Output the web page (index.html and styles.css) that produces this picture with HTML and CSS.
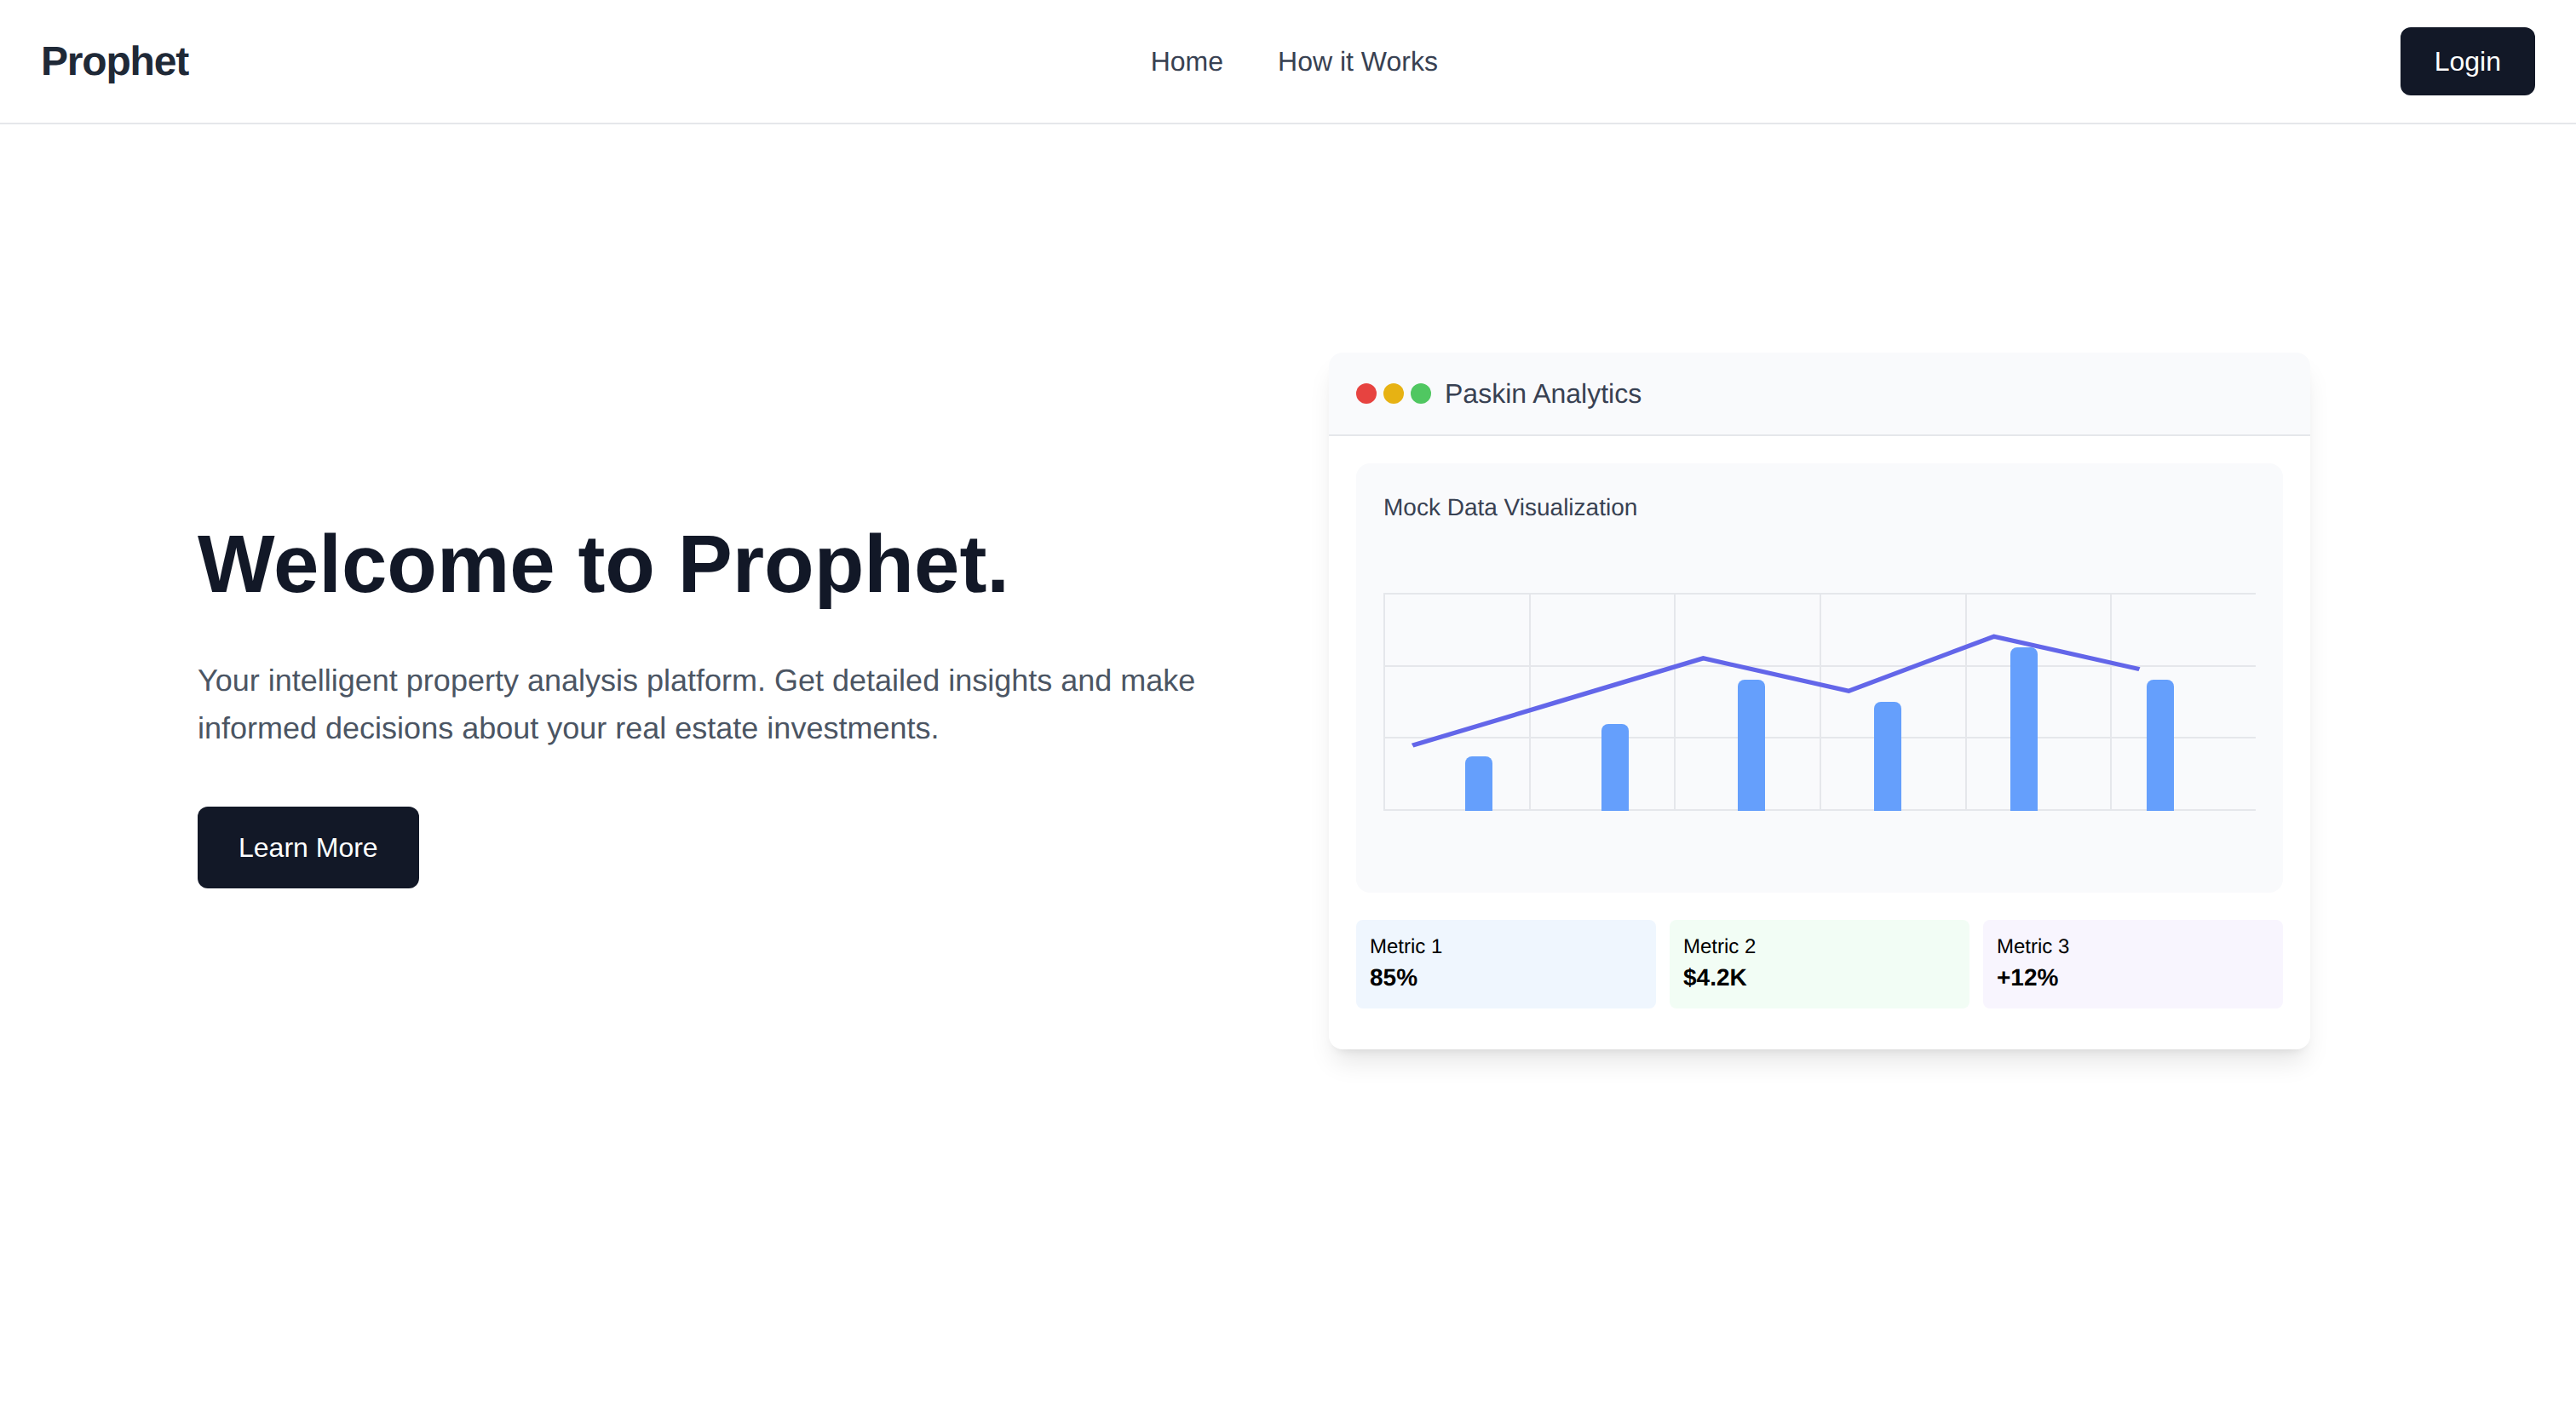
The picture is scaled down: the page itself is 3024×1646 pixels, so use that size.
FILE: index.html
```html
<!DOCTYPE html>
<html lang="en">
<head>
    <meta charset="UTF-8">
    <meta name="viewport" content="width=device-width, initial-scale=1.0">
    <title>Prophet</title>
    <link rel="stylesheet" href="styles.css">
</head>
<body>
    <header class="navbar">
        <a href="#" class="logo">Prophet</a>
        <nav class="nav-links">
            <a href="#">Home</a>
            <a href="#how-it-works">How it Works</a>
        </nav>
        <button type="button" class="btn login-btn">Login</button>
    </header>

    <main class="hero">
        <div class="hero-container">
            <div class="hero-text">
                <h1>Welcome to Prophet.</h1>
                <p>Your intelligent property analysis platform. Get detailed insights and make informed decisions about your real estate investments.</p>
                <button type="button" class="btn learn-btn">Learn More</button>
            </div>

            <div class="card">
                <div class="card-header">
                    <div class="dots">
                        <span class="dot red"></span>
                        <span class="dot yellow"></span>
                        <span class="dot green"></span>
                    </div>
                    <span class="card-title">Paskin Analytics</span>
                </div>
                <div class="card-body">
                    <div class="chart-panel">
                        <div class="chart-title">Mock Data Visualization</div>
                        <div class="chart">
                            <!-- grid lines -->
                            <div class="grid-rows">
                                <span></span><span></span><span></span><span></span>
                            </div>
                            <div class="grid-cols">
                                <span></span><span></span><span></span><span></span><span></span><span></span>
                            </div>
                            <!-- bars -->
                            <div class="bars">
                                <div class="bar" style="height: 25%"></div>
                                <div class="bar" style="height: 40%"></div>
                                <div class="bar" style="height: 60%"></div>
                                <div class="bar" style="height: 50%"></div>
                                <div class="bar" style="height: 75%"></div>
                                <div class="bar" style="height: 60%"></div>
                            </div>
                            <!-- trend line -->
                            <svg class="trend" viewBox="0 0 300 100" preserveAspectRatio="none">
                                <polyline points="10,70 60,50 110,30 160,45 210,20 260,35" />
                            </svg>
                        </div>
                    </div>
                    <div class="metrics">
                        <div class="metric blue">
                            <div class="metric-label">Metric 1</div>
                            <div class="metric-value">85%</div>
                        </div>
                        <div class="metric mint">
                            <div class="metric-label">Metric 2</div>
                            <div class="metric-value">$4.2K</div>
                        </div>
                        <div class="metric purple">
                            <div class="metric-label">Metric 3</div>
                            <div class="metric-value">+12%</div>
                        </div>
                    </div>
                </div>
            </div>
        </div>
    </main>
</body>
</html>
```

FILE: styles.css
```css
* {
    box-sizing: border-box;
}
body {
    display: flex;
    flex-direction: column;
    min-height: 100vh;
    margin: 0;
    font-family: "Liberation Sans", Arial, sans-serif;
    font-size: 32px;
    line-height: 48px;
    color: #000;
    background-color: #fff;
    text-rendering: geometricPrecision;
}
a {
    color: inherit;
    text-decoration: none;
}
h1, p {
    margin: 0;
}
.btn {
    border: none;
    border-radius: 12px;
    background-color: #121827;
    color: white;
    font: inherit;
    cursor: pointer;
}

/* navbar */
.navbar {
    display: flex;
    align-items: center;
    justify-content: space-between;
    padding: 32px 48px;
    border-bottom: 2px solid #e5e7eb;
}
.logo {
    padding-top: 1px;
    font-size: 48px;
    font-weight: bold;
    letter-spacing: -0.025em;
    color: #1f2937;
}
.nav-links {
    display: flex;
    gap: 64px;
    color: #384152;
}
.login-btn {
    padding: 16px 40px;
}

/* hero */
.hero {
    flex: 1;
    display: flex;
    align-items: center;
    justify-content: center;
    padding-bottom: 146px;
}
.hero-container {
    display: grid;
    grid-template-columns: 1fr 1fr;
    gap: 96px;
    align-items: center;
    width: 2560px;
}
.hero-text h1 {
    margin-bottom: 48px;
    font-size: 96px;
    line-height: 120px;
    color: #121827;
}
.hero-text p {
    margin-bottom: 64px;
    font-size: 36px;
    line-height: 56px;
    color: #4b5563;
}
.learn-btn {
    display: block;
    padding: 24px 48px;
}

/* analytics card */
.card {
    max-width: 1152px;
    border-radius: 16px;
    background-color: white;
    box-shadow: 0 20px 30px -6px rgba(0, 0, 0, 0.1), 0 8px 12px -8px rgba(0, 0, 0, 0.1);
    overflow: hidden;
}
.card-header {
    display: flex;
    align-items: center;
    gap: 16px;
    padding: 24px 32px;
    border-bottom: 2px solid #e5e7eb;
    background-color: #f9fafc;
    color: #384152;
}
.dots {
    display: flex;
    gap: 8px;
}
.dot {
    width: 24px;
    height: 24px;
    border-radius: 50%;
}
.red {
    background-color: #e74340;
}
.yellow {
    background-color: #e7b213;
}
.green {
    background-color: #50c761;
}
.card-body {
    padding: 32px 32px 48px;
}
.chart-panel {
    margin-bottom: 32px;
    padding: 32px;
    border-radius: 16px;
    background-color: #f9fafc;
}
.chart-title {
    font-size: 28px;
    line-height: 40px;
    color: #384152;
}

/* every layer of the chart shares one grid cell */
.chart {
    display: grid;
    grid-template-rows: 256px;
    margin-top: 16px;
    padding: 64px 0;
}
.chart > * {
    grid-area: 1 / 1;
}
.grid-rows {
    display: flex;
    flex-direction: column;
    justify-content: space-between;
}
.grid-rows span {
    height: 2px;
    background-color: #e5e7eb;
}
.grid-cols {
    display: grid;
    grid-template-columns: repeat(6, 1fr);
}
.grid-cols span {
    border-left: 2px solid #e5e7eb;
}
.bars {
    display: flex;
    align-items: flex-end;
    justify-content: space-around;
    padding: 0 32px;
}
.bar {
    width: 32px;
    border-radius: 8px 8px 0 0;
    background-color: #659ffc;
}
.trend {
    width: 100%;
    height: 100%;
}
.trend polyline {
    fill: none;
    stroke: #6366e9;
    stroke-width: 2;
}

/* metrics */
.metrics {
    display: grid;
    grid-template-columns: repeat(3, 1fr);
    gap: 16px;
}
.metric {
    padding: 16px;
    border-radius: 8px;
}
.blue {
    background-color: #eff6fe;
}
.mint {
    background-color: #f2fdf5;
}
.purple {
    background-color: #f8f5fe;
}
.metric-label {
    font-size: 24px;
    line-height: 32px;
}
.metric-value {
    font-size: 28px;
    font-weight: bold;
    line-height: 40px;
}
```
